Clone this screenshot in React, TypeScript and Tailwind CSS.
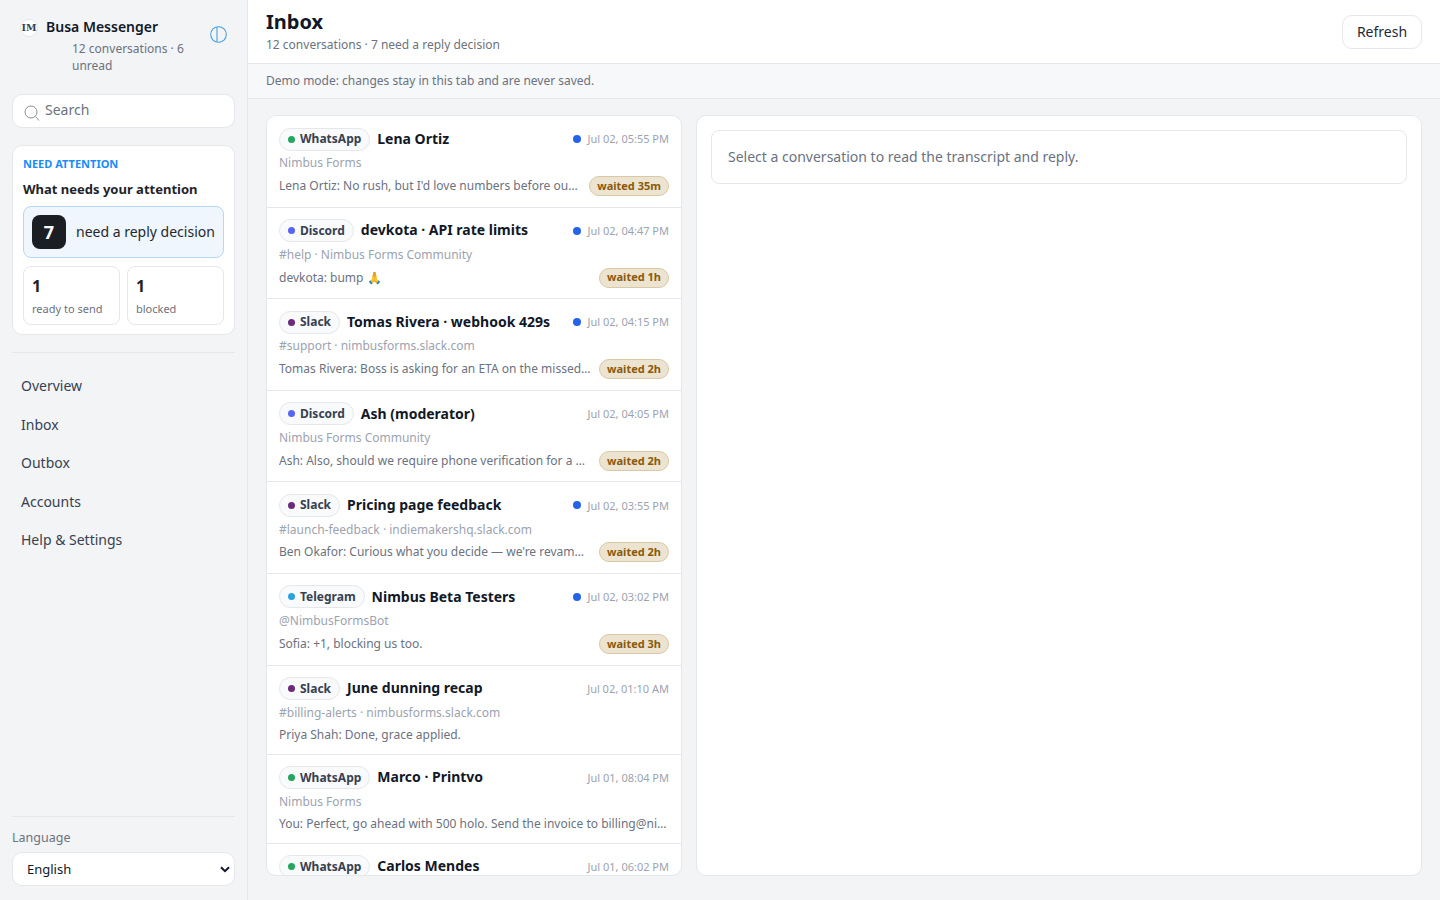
import React from 'react';

type Channel = 'WhatsApp' | 'Discord' | 'Slack' | 'Telegram';

interface Conversation {
  channel: Channel;
  title: string;
  sub: string;
  preview: React.ReactNode;
  time: string;
  unread?: boolean;
  waited?: string;
}

const dotColors: Record<Channel, string> = {
  WhatsApp: 'bg-[#25a55f]',
  Discord: 'bg-[#5865f2]',
  Slack: 'bg-[#6b2a7c]',
  Telegram: 'bg-[#2aa3dc]',
};

const conversations: Conversation[] = [
  { channel: 'WhatsApp', title: 'Lena Ortiz', sub: 'Nimbus Forms', preview: "Lena Ortiz: No rush, but I'd love numbers before our call tomorrow", time: 'Jul 02, 05:55 PM', unread: true, waited: 'waited 35m' },
  { channel: 'Discord', title: 'devkota · API rate limits', sub: '#help · Nimbus Forms Community', preview: 'devkota: bump 🙏', time: 'Jul 02, 04:47 PM', unread: true, waited: 'waited 1h' },
  { channel: 'Slack', title: 'Tomas Rivera · webhook 429s', sub: '#support · nimbusforms.slack.com', preview: 'Tomas Rivera: Boss is asking for an ETA on the missed webhooks', time: 'Jul 02, 04:15 PM', unread: true, waited: 'waited 2h' },
  { channel: 'Discord', title: 'Ash (moderator)', sub: 'Nimbus Forms Community', preview: 'Ash: Also, should we require phone verification for a new signup?', time: 'Jul 02, 04:05 PM', waited: 'waited 2h' },
  { channel: 'Slack', title: 'Pricing page feedback', sub: '#launch-feedback · indiemakershq.slack.com', preview: "Ben Okafor: Curious what you decide — we're revamping ours as well", time: 'Jul 02, 03:55 PM', unread: true, waited: 'waited 2h' },
  { channel: 'Telegram', title: 'Nimbus Beta Testers', sub: '@NimbusFormsBot', preview: 'Sofia: +1, blocking us too.', time: 'Jul 02, 03:02 PM', unread: true, waited: 'waited 3h' },
  { channel: 'Slack', title: 'June dunning recap', sub: '#billing-alerts · nimbusforms.slack.com', preview: 'Priya Shah: Done, grace applied.', time: 'Jul 02, 01:10 AM' },
  { channel: 'WhatsApp', title: 'Marco · Printvo', sub: 'Nimbus Forms', preview: 'You: Perfect, go ahead with 500 holo. Send the invoice to billing@nimbusforms.com', time: 'Jul 01, 08:04 PM' },
  { channel: 'WhatsApp', title: 'Carlos Mendes', sub: 'Nimbus Forms', preview: 'Carlos: Thanks, talk soon.', time: 'Jul 01, 06:02 PM' },
];

const navItems = ['Overview', 'Inbox', 'Outbox', 'Accounts', 'Help & Settings'];

const Sidebar: React.FC = () => {
  return (
    <aside className="w-[248px] shrink-0 h-full flex flex-col border-r border-[#e5e7eb] bg-[#f3f4f6] px-3">
      <div className="flex items-start pt-[17px] pl-2 pr-2 h-[94px] shrink-0">
        <div className="mt-[2px] w-[18px] h-[18px] shrink-0 rounded-full border border-[#e5e7eb] bg-white flex items-center justify-center text-[9.5px] font-bold leading-none text-[#374151] font-['DejaVu_Serif',serif]">
          IM
        </div>
        <div className="ml-2 flex-1 min-w-0">
          <div className="text-[14px] leading-5 font-semibold text-[#111827]">Busa Messenger</div>
          <div className="mt-[3px] ml-[26px] text-[12px] leading-[17px] text-[#6b7280]">12 conversations · 6 unread</div>
        </div>
        <svg className="mt-[9px] shrink-0" width="17" height="17" viewBox="0 0 17 17" fill="none" stroke="#4a9fe0" strokeWidth="1.1">
          <circle cx="8.5" cy="8.5" r="7.8" />
          <path d="M7 1v15" />
        </svg>
      </div>

      <div className="h-[34px] shrink-0 flex items-center rounded-[10px] border border-[#e5e7eb] bg-white pl-[11px]">
        <svg width="16" height="17" viewBox="0 0 16 17" fill="none" stroke="#8b8f96" strokeWidth="1" className="mt-[4px]">
          <circle cx="7" cy="7" r="6" />
          <path d="M11.5 11.5l3.5 4" />
        </svg>
        <span className="ml-[5px] mb-[4px] text-[14px] text-[#6b7280]">Search</span>
      </div>

      <section className="mt-[17px] h-[190px] shrink-0 rounded-[10px] border border-[#e5e7eb] bg-white px-[10px] pt-[10px]">
        <div className="text-[11px] leading-[16px] font-bold text-[#1a8cff]">NEED ATTENTION</div>
        <div className="mt-2 text-[13px] leading-[18px] font-bold text-[#1f2328]">What needs your attention</div>
        <div className="mt-2 h-[52px] flex items-center rounded-[8px] border border-[#b6d8f6] bg-[#eff6fe] pl-2">
          <div className="w-[34px] h-[34px] rounded-[8px] bg-[#1b1f24] flex items-center justify-center text-[18px] font-bold text-white">7</div>
          <span className="ml-[10px] mb-[1px] text-[14px] whitespace-nowrap text-[#24292f]">need a reply decision</span>
        </div>
        <div className="mt-2 grid grid-cols-2 gap-[7px]">
          <Stat value="1" label="ready to send" />
          <Stat value="1" label="blocked" />
        </div>
      </section>

      <div className="mt-[17px] border-t border-[#e5e7eb]" />

      <nav className="mt-[13.3px] flex flex-col">
        {navItems.map((item) => (
          <div key={item} className="h-[38.5px] flex items-center pl-[9px] text-[14px] text-[#374151]">{item}</div>
        ))}
      </nav>

      <div className="mt-auto border-t border-[#e5e7eb] pt-3 pb-[14px]">
        <div className="text-[12.5px] leading-[18px] text-[#6b7280]">Language</div>
        <div className="mt-[5px] h-[34px] flex items-center justify-between rounded-[10px] border border-[#e5e7eb] bg-white pl-[14px] pr-[4px] text-[13px] text-[#111827]">
          <span className="mt-[2px]">English</span>
          <svg width="10" height="7" viewBox="0 0 10 7" fill="none" stroke="#111827" strokeWidth="2">
            <path d="M1 1.2l4 4 4-4" />
          </svg>
        </div>
      </div>
    </aside>
  );
};

const Stat = ({ value, label }: { value: string; label: string }) => (
  <div className="h-[59px] rounded-[8px] border border-[#e5e7eb] bg-white pl-2 pt-[7px]">
    <div className="text-[16px] leading-[24px] font-bold text-[#1f2328]">{value}</div>
    <div className="mt-[3px] text-[11px] leading-[16px] text-[#6b7280]">{label}</div>
  </div>
);

const ConversationRow = ({ conversation }: { conversation: Conversation }) => {
  const { channel, title, sub, preview, time, unread, waited } = conversation;
  return (
    <div className={`${waited ? 'h-[91.6px]' : 'h-[89px]'} shrink-0 border-b border-[#e5e7eb] px-3 pt-[11.5px]`}>
      <div className="flex items-center h-[23px]">
        <span className="h-[23px] flex items-center rounded-full border border-[#e5e7eb] bg-[#f9fafb] pl-2 pr-2 text-[12px] font-bold text-[#374151]">
          <span className={`w-[7px] h-[7px] rounded-full mr-[5px] ${dotColors[channel]}`} />
          {channel}
        </span>
        <span className="ml-[7px] mb-[1.5px] text-[14px] font-bold whitespace-nowrap text-[#111827]">{title}</span>
        {unread && <span className="ml-auto w-2 h-2 rounded-full bg-[#2563eb]" />}
        <span className={`${unread ? 'ml-[7px]' : 'ml-auto'} mt-[1px] text-[11px] whitespace-nowrap text-[#9ca3af]`}>{time}</span>
      </div>
      <div className="mt-[3.8px] h-[18px] text-[12px] leading-[18px] text-[#9ca3af] truncate">{sub}</div>
      <div className={`${waited ? 'mt-[3.8px]' : 'mt-[2.7px]'} flex items-center h-[20px] gap-2`}>
        <span className="flex-1 min-w-0 truncate text-[12px] text-[#6b7280]">{preview}</span>
        {waited && (
          <span className="h-[20px] flex items-center shrink-0 rounded-full border border-[#d8c9a6] bg-[#ece3d0] px-[7px] text-[11px] font-bold text-[#8a5a0b]">
            {waited}
          </span>
        )}
      </div>
    </div>
  );
};

export default function App() {
  return (
    <div className="w-[1440px] h-[900px] flex overflow-hidden bg-[#f3f4f6] font-['Noto_Sans',sans-serif]">
      <Sidebar />
      <main className="flex-1 min-w-0 flex flex-col">
        <header className="h-[64px] shrink-0 flex items-center justify-between border-b border-[#e5e7eb] bg-white pl-[18px] pr-[18px]">
          <div>
            <h1 className="text-[20px] leading-[26px] font-bold text-[#111827]">Inbox</h1>
            <p className="mt-[1px] text-[12px] leading-[18px] text-[#6b7280]">12 conversations · 7 need a reply decision</p>
          </div>
          <button className="h-[34px] w-[80px] rounded-[10px] border border-[#e5e7eb] bg-white text-[14px] text-[#1f2937]">Refresh</button>
        </header>
        <div className="h-[35px] shrink-0 flex items-center border-b border-[#e5e7eb] bg-[#f7f8f9] pl-[18px] text-[12px] text-[#6b7280]">
          Demo mode: changes stay in this tab and are never saved.
        </div>
        <div className="flex-1 min-h-0 flex gap-[14px] pl-[18px] pr-[18px] pt-4 pb-[24px]">
          <div className="w-[416px] shrink-0 flex flex-col overflow-hidden rounded-[10px] border border-[#e5e7eb] bg-white">
            {conversations.map((c) => (
              <ConversationRow key={c.title} conversation={c} />
            ))}
          </div>
          <div className="flex-1 rounded-[10px] border border-[#e5e7eb] bg-white p-[14px]">
            <div className="h-[54px] flex items-center rounded-[8px] border border-[#e5e7eb] pl-4 pb-[2px] text-[14px] text-[#6b7280]">
              Select a conversation to read the transcript and reply.
            </div>
          </div>
        </div>
      </main>
    </div>
  );
}
